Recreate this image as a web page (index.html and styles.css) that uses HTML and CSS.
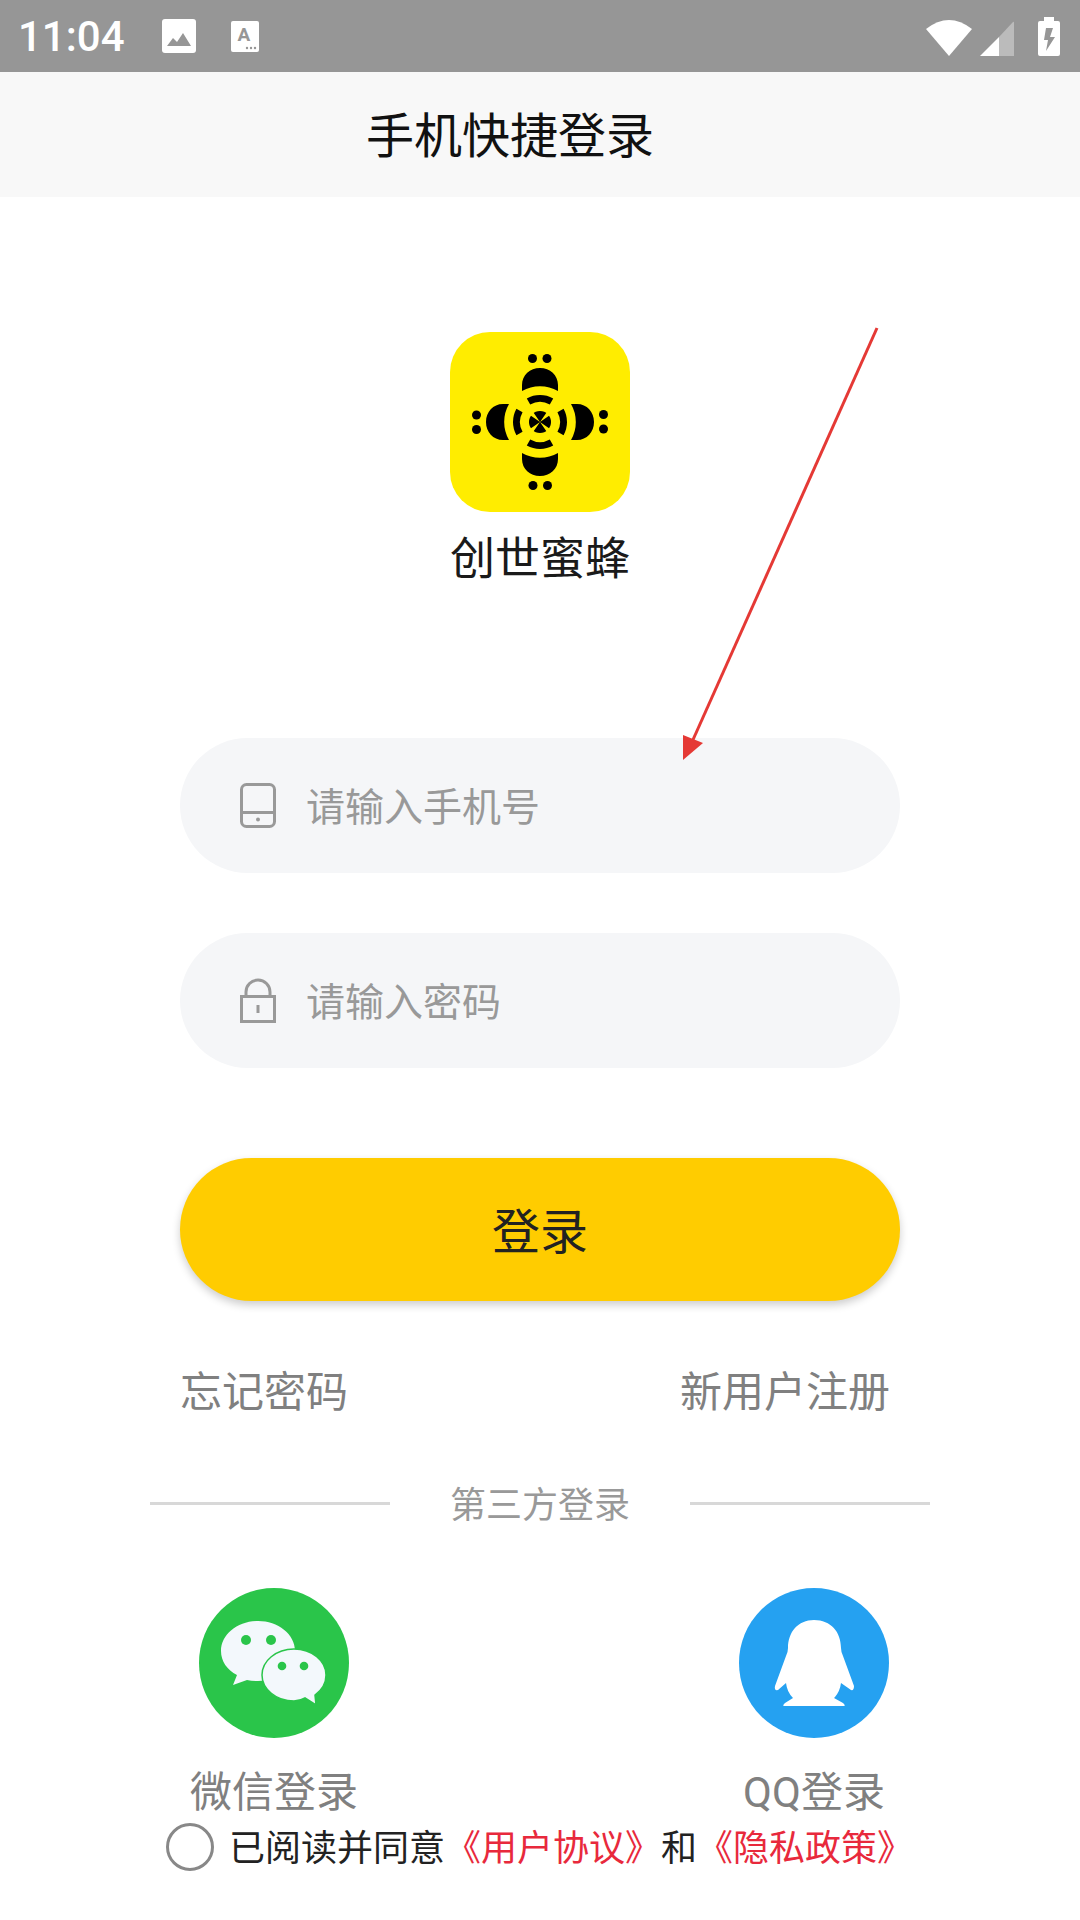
FILE: index.html
```html
<!DOCTYPE html>
<html lang="zh-CN">
<head>
    <meta charset="UTF-8">
    <meta name="viewport" content="width=device-width, initial-scale=1.0">
    <title>手机快捷登录</title>
    <link rel="stylesheet" href="styles.css">
</head>
<body>
    <div class="status-bar">
        <span class="status-time">11:04</span>
        <svg class="status-image" viewBox="0 0 34 34">
            <rect width="34" height="34" rx="3" fill="#fff"/>
            <path d="M5 27l6-8 4 4 6-9 8 13z" fill="#969696"/>
        </svg>
        <svg class="status-font" viewBox="0 0 28 31">
            <rect width="28" height="31" rx="2" fill="#fff"/>
            <text x="13" y="20" text-anchor="middle" class="status-font-letter">A</text>
            <circle cx="16" cy="27" r="1.2" fill="#969696"/>
            <circle cx="20" cy="27" r="1.2" fill="#969696"/>
            <circle cx="24" cy="27" r="1.2" fill="#969696"/>
        </svg>
        <div class="status-right">
            <svg class="status-wifi" viewBox="0 0 46 36">
                <path d="M0 9Q23-9 46 9L23 36z" fill="#fff"/>
            </svg>
            <svg class="status-signal" viewBox="0 0 34 35">
                <path d="M19 16L0 35h19z" fill="#fff"/>
                <path d="M19 16L33 1q1-1 1 1v33H19z" fill="#bbb"/>
            </svg>
            <svg class="status-battery" viewBox="0 0 22 39">
                <path d="M6 0h10v4h4q2 0 2 2v31q0 2-2 2H2q-2 0-2-2V6q0-2 2-2h4z" fill="#fff"/>
                <path d="M8 11h7l-3 9h5L8 34l2-11H6z" fill="#969696"/>
            </svg>
        </div>
    </div>

    <div class="top-bar">手机快捷登录</div>

    <div class="brand">
        <svg class="brand-logo" viewBox="-90 -90 180 180">
            <defs>
                <g id="bee-arm">
                    <circle cx="-7.5" cy="-63.5" r="4.5"/>
                    <circle cx="7" cy="-63.5" r="4.5"/>
                    <path d="M-18-31V-37C-18-47-10-54 0-54S18-47 18-37V-31A36 36 0 0 0-18-31z"/>
                    <path d="M-11.500-20.500A23.500 23.500 0 0 1 11.500-20.500" fill="none" stroke="#000" stroke-width="7"/>
                </g>
            </defs>
            <rect x="-90" y="-90" width="180" height="180" rx="40" fill="#ffed00"/>
            <use href="#bee-arm"/>
            <use href="#bee-arm" transform="rotate(90)"/>
            <use href="#bee-arm" transform="rotate(180)"/>
            <use href="#bee-arm" transform="rotate(270)"/>
            <circle r="11"/>
            <path d="M0 0L13-9 9-13zM0 0L13 9 9 13zM0 0L-13 9-9 13zM0 0L-13-9-9-13z" fill="#ffed00"/>
        </svg>
        <div class="brand-name">创世蜜蜂</div>
    </div>

    <div class="form">
        <div class="field">
            <svg class="field-icon" viewBox="0 0 36 45">
                <rect x="1.500" y="1.500" width="33" height="42" rx="5" fill="none" stroke="#999" stroke-width="3"/>
                <path d="M2 29.500h32" stroke="#999" stroke-width="3"/>
                <circle cx="18" cy="36.500" r="2" fill="#999"/>
            </svg>
            <span class="field-text">请输入手机号</span>
        </div>
        <div class="field">
            <svg class="field-icon" viewBox="0 0 36 45">
                <path d="M6 18v-4a12 12 0 0 1 24 0v4" fill="none" stroke="#999" stroke-width="3"/>
                <rect x="1.500" y="18.500" width="33" height="25" fill="none" stroke="#999" stroke-width="3"/>
                <path d="M18 27v8" stroke="#999" stroke-width="3"/>
            </svg>
            <span class="field-text">请输入密码</span>
        </div>
        <button class="login-btn">登录</button>
        <div class="form-links">
            <span>忘记密码</span>
            <span>新用户注册</span>
        </div>
    </div>

    <div class="divider">
        <span class="divider-line"></span>
        <span class="divider-text">第三方登录</span>
        <span class="divider-line"></span>
    </div>

    <div class="social">
        <div class="social-item">
            <svg class="social-icon" viewBox="0 0 150 150">
                <circle cx="75" cy="75" r="75" fill="#2ac54a"/>
                <path d="M59 33c20 0 37 13 37 30S79 93 59 93q-6 0-11-1L34 97l4-10C28 82 22 73 22 63c0-17 17-30 37-30z" fill="#f3f8fc"/>
                <circle cx="47" cy="52" r="5" fill="#2ac54a"/>
                <circle cx="72" cy="52" r="5" fill="#2ac54a"/>
                <path d="M95 61c18 0 32 12 32 26 0 8-4 15-11 20l1 10-11-7q-5 3-11 3c-18 0-32-12-32-26s14-26 32-26z" fill="#f3f8fc" stroke="#2ac54a" stroke-width="1.500"/>
                <circle cx="83" cy="78" r="4.300" fill="#2ac54a"/>
                <circle cx="105" cy="78" r="4.300" fill="#2ac54a"/>
            </svg>
            <span class="social-label">微信登录</span>
        </div>
        <div class="social-item">
            <svg class="social-icon" viewBox="0 0 150 150">
                <circle cx="75" cy="75" r="75" fill="#25a1f1"/>
                <path d="M75 32c17 0 27 12 27 28q0 4 2 8l11 30q0 5-3 4l-10-7q-1 8-6 14l-1 1 9 5q3 3 1 3H45q-2 0 1-3l8-5q-6-6-7-15l-8 7q-4 1-3-4l11-30q2-4 2-8c0-16 10-28 26-28z" fill="#fff"/>
            </svg>
            <span class="social-label">QQ登录</span>
        </div>
    </div>

    <div class="agreement">
        <span class="agreement-check"></span>
        <span class="agreement-text">已阅读并同意<span class="agreement-link">《用户协议》</span>和<span class="agreement-link">《隐私政策》</span></span>
    </div>

    <!-- red annotation arrow on top of the page -->
    <svg class="note-arrow" viewBox="0 0 1080 1920">
        <path d="M877 328L692 742" stroke="#e53935" stroke-width="3" fill="none"/>
        <path d="M683 760V735L703 743z" fill="#e53935"/>
    </svg>
</body>
</html>
```

FILE: styles.css
```css
* {
    margin: 0;
    padding: 0;
    box-sizing: border-box;
}

body {
    position: relative;
    width: 1080px;
    height: 1920px;
    overflow: hidden;
    background: #fff;
    font-family: "Noto Sans CJK SC", "Noto Sans", sans-serif;
}

.status-bar {
    display: flex;
    align-items: center;
    height: 72px;
    padding: 0 20px 0 18px;
    background: #969696;
    color: #fff;
}

.status-time {
    width: 144px;
    padding-top: 2px;
    font-family: Roboto, sans-serif;
    font-size: 42px;
    font-weight: 500;
    line-height: 72px;
}

.status-image {
    width: 34px;
    height: 34px;
}

.status-font {
    width: 28px;
    height: 31px;
    margin-left: 35px;
}

.status-font-letter {
    font-family: Roboto, sans-serif;
    font-size: 19px;
    font-weight: 700;
    fill: #969696;
}

.status-right {
    display: flex;
    align-items: flex-end;
    margin-left: auto;
}

.status-wifi {
    width: 46px;
    height: 36px;
}

.status-signal {
    width: 34px;
    height: 35px;
    margin-left: 8px;
}

.status-battery {
    width: 22px;
    height: 39px;
    margin-left: 24px;
}

.top-bar {
    height: 125px;
    padding-right: 60px;
    background: #f8f8f8;
    color: #111;
    font-size: 48px;
    line-height: 121px;
    text-align: center;
}

.brand {
    display: flex;
    flex-direction: column;
    align-items: center;
    padding-top: 135px;
}

.brand-logo {
    display: block;
    width: 180px;
    height: 180px;
}

.brand-name {
    margin-top: 14px;
    color: #1a1a1a;
    font-size: 45px;
    line-height: 60px;
}

.form {
    width: 720px;
    margin: 152px auto 0;
}

.field {
    display: flex;
    align-items: center;
    height: 135px;
    margin-bottom: 60px;
    padding-left: 60px;
    border-radius: 68px;
    background: #f5f6f8;
}

.field-icon {
    width: 36px;
    height: 45px;
}

.field-text {
    margin: 0 0 4px 30px;
    color: #999;
    font-size: 39px;
}

.login-btn {
    display: block;
    width: 100%;
    height: 143px;
    margin-top: 90px;
    padding-bottom: 4px;
    border: none;
    border-radius: 72px;
    background: #ffcc00;
    box-shadow: 0 4px 8px rgba(0, 0, 0, 0.2);
    color: #222;
    font-family: inherit;
    font-size: 48px;
}

.form-links {
    display: flex;
    justify-content: space-between;
    margin-top: 58px;
    padding: 0 10px 0 0;
    color: #808080;
    font-size: 42px;
    line-height: 60px;
}

.divider {
    display: flex;
    align-items: center;
    justify-content: center;
    height: 50px;
    margin-top: 59px;
}

.divider-line {
    width: 240px;
    height: 3px;
    background: #d8d8d8;
}

.divider-text {
    width: 300px;
    padding-bottom: 2px;
    color: #999;
    font-size: 36px;
    text-align: center;
}

.social {
    display: flex;
    justify-content: space-between;
    width: 740px;
    margin: 60px 0 0 174px;
}

.social-item {
    display: flex;
    flex-direction: column;
    align-items: center;
    width: 200px;
}

.social-icon {
    display: block;
    width: 150px;
    height: 150px;
}

.social-label {
    margin-top: 27px;
    color: #808080;
    font-family: Roboto, "Noto Sans CJK SC", sans-serif;
    font-size: 42px;
    line-height: 56px;
}

.agreement {
    display: flex;
    align-items: center;
    height: 48px;
    margin: 2px 0 0 166px;
    color: #222;
    font-size: 36px;
    white-space: nowrap;
}

.agreement-check {
    width: 48px;
    height: 48px;
    margin-right: 15px;
    border: 3px solid #888;
    border-radius: 50%;
}

.agreement-text {
    padding-bottom: 4px;
}

.agreement-link {
    color: #e8293c;
}

.note-arrow {
    position: absolute;
    top: 0;
    left: 0;
    width: 1080px;
    height: 1920px;
    pointer-events: none;
}
```
